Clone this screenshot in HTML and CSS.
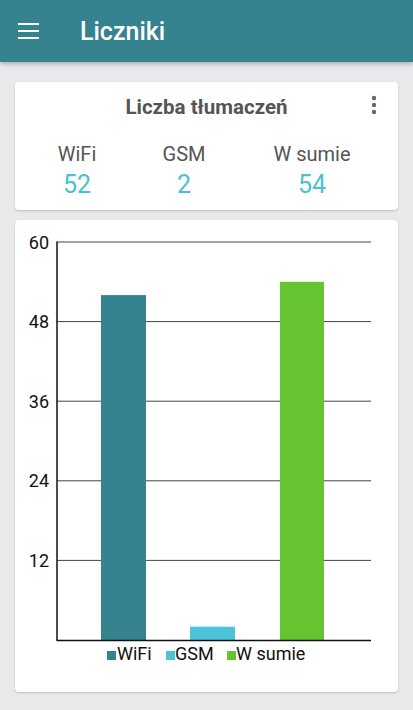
FILE: index.html
```html
<html>
    <head>
        <title>Liczniki</title>
        <link rel="stylesheet" href="styles.css">
    </head>

    <body>
        <header class="toolbar">
            <svg class="menu" width="21" height="16" viewBox="0 0 21 16">
                <rect x="0" y="0" width="21" height="2" fill="#fff"/>
                <rect x="0" y="7" width="21" height="2" fill="#fff"/>
                <rect x="0" y="14" width="21" height="2" fill="#fff"/>
            </svg>
            <span class="toolbar-title">Liczniki</span>
        </header>

        <main>
            <!-- summary card -->
            <div class="card summary">
                <div class="summary-title">Liczba tłumaczeń</div>
                <svg class="kebab" width="6" height="20" viewBox="0 0 6 20">
                    <circle cx="3" cy="3" r="2.2" fill="#666"/>
                    <circle cx="3" cy="10" r="2.2" fill="#666"/>
                    <circle cx="3" cy="17" r="2.2" fill="#666"/>
                </svg>
                <div class="counters">
                    <div class="counter">
                        <div class="counter-label">WiFi</div>
                        <div class="counter-value">52</div>
                    </div>
                    <div class="counter">
                        <div class="counter-label">GSM</div>
                        <div class="counter-value">2</div>
                    </div>
                    <div class="counter">
                        <div class="counter-label">W sumie</div>
                        <div class="counter-value">54</div>
                    </div>
                </div>
            </div>

            <!-- chart card -->
            <div class="card chart">
                <svg width="380" height="472" viewBox="0 0 380 472">
                    <g class="grid">
                        <line x1="42" y1="22" x2="356" y2="22"/>
                        <line x1="42" y1="101.6" x2="356" y2="101.6"/>
                        <line x1="42" y1="181.2" x2="356" y2="181.2"/>
                        <line x1="42" y1="260.8" x2="356" y2="260.8"/>
                        <line x1="42" y1="340.4" x2="356" y2="340.4"/>
                    </g>
                    <g class="axis-labels">
                        <text x="34" y="28.5">60</text>
                        <text x="34" y="108.1">48</text>
                        <text x="34" y="187.7">36</text>
                        <text x="34" y="267.3">24</text>
                        <text x="34" y="346.9">12</text>
                    </g>
                    <rect x="86" y="75.1" width="45" height="344.9" fill="#34838f"/>
                    <rect x="175" y="406.7" width="45" height="13.3" fill="#4cc3d9"/>
                    <rect x="265" y="61.8" width="44" height="358.2" fill="#66c430"/>
                    <line class="axis" x1="42" y1="21.5" x2="42" y2="420.5"/>
                    <line class="axis" x1="41.5" y1="420.5" x2="356" y2="420.5"/>
                    <g class="legend">
                        <rect x="92" y="431" width="9" height="9" fill="#34838f"/>
                        <text x="102" y="440">WiFi</text>
                        <rect x="151" y="431" width="9" height="9" fill="#4cc3d9"/>
                        <text x="160" y="440">GSM</text>
                        <rect x="212" y="431" width="9" height="9" fill="#66c430"/>
                        <text x="221" y="440">W sumie</text>
                    </g>
                </svg>
            </div>
        </main>
    </body>
</html>
```

FILE: styles.css
```css
/* Page */
body {
    margin: 0;
    background-color: #e8e9eb;
    font-family: Roboto, "Noto Sans", sans-serif;
}

/* Top bar */
.toolbar {
    height: 62px;
    display: flex;
    align-items: center;
    padding-left: 18px;
    background-color: #35838f;
    box-shadow: 0 2px 4px rgba(0, 0, 0, 0.25);
}

.menu {
    display: block;
}

.toolbar-title {
    margin-left: 41px;
    color: white;
    font-size: 25px;
    font-weight: 500;
}

/* Content */
main {
    display: flex;
    flex-direction: column;
    gap: 10px;
    padding: 20px 15px 0 15px;
}

.card {
    position: relative;
    background-color: white;
    border-radius: 4px;
    box-shadow: 0 1px 2px rgba(0, 0, 0, 0.2);
}

/* Summary card */
.summary {
    height: 128px;
    box-sizing: border-box;
    padding-top: 13px;
}

.summary-title {
    text-align: center;
    font-size: 20.5px;
    line-height: 24px;
    font-weight: bold;
    color: #555;
}

.kebab {
    position: absolute;
    right: 21px;
    top: 13px;
}

.counters {
    display: grid;
    grid-template-columns: 124px 90px 166px;
    margin-top: 24px;
    text-align: center;
}

.counter-label {
    font-size: 20px;
    line-height: 22px;
    color: #555;
}

.counter-value {
    margin-top: 5px;
    font-size: 25px;
    line-height: 30px;
    color: #4dc0d3;
}

/* Chart card */
.chart {
    height: 472px;
}

.chart svg {
    display: block;
}

.grid line {
    stroke: #444;
    stroke-width: 1;
}

.axis {
    stroke: #111;
    stroke-width: 1.5;
}

.axis-labels text {
    font-size: 18px;
    fill: #111;
    text-anchor: end;
}

.legend text {
    font-size: 18px;
    fill: #111;
}
```
